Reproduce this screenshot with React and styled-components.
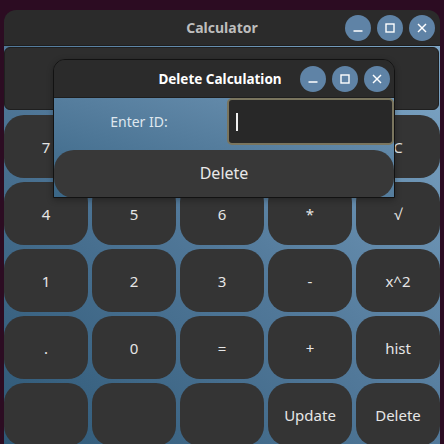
import React from "react";
import styled, { createGlobalStyle } from "styled-components";

const Global = createGlobalStyle`
  html, body { margin: 0; padding: 0; }
  body {
    background: #2c0c22;
    width: 444px;
    height: 444px;
    overflow: hidden;
    font-family: "Noto Sans", "Open Sans", sans-serif;
  }
`;

const Desktop = styled.div`
  position: relative;
  width: 444px;
  height: 444px;
  padding: 10px 4px 0 4px;
  box-sizing: border-box;
`;

const Window = styled.div`
  width: 436px;
  height: 434px;
  display: flex;
  flex-direction: column;
  border-radius: 12px 12px 0 0;
  overflow: hidden;
`;

const TitleBar = styled.div`
  position: relative;
  flex: none;
  height: ${(p) => p.$h}px;
  background: #2b2b2b;
  display: flex;
  align-items: center;
  justify-content: center;
  border-bottom: 1px solid #1e1e1e;
  box-sizing: border-box;
`;

const Title = styled.div`
  font-weight: 700;
  font-size: ${(p) => p.$size}px;
  color: ${(p) => p.$color};
  transform: translateX(${(p) => p.$shift}px);
`;

const Controls = styled.div`
  position: absolute;
  right: ${(p) => p.$right}px;
  top: 50%;
  transform: translateY(-50%);
  display: flex;
  gap: 6px;
`;

const Circle = styled.div`
  width: 26px;
  height: 26px;
  border-radius: 50%;
  background: #5f83a6;
  display: flex;
  align-items: center;
  justify-content: center;
`;

const Content = styled.div`
  flex: 1;
  background: linear-gradient(to top right, #2e5876 0%, #52799a 50%, #7ea6c6 100%);
  display: flex;
  flex-direction: column;
  gap: 5px;
  padding-top: 1px;
`;

const Display = styled.div`
  height: 61px;
  flex: none;
  margin: 0 1px 0 0;
  background: #2e2e2e;
  border: 1px solid #1f1f1f;
  border-radius: 6px;
`;

const Grid = styled.div`
  display: grid;
  grid-template-columns: repeat(5, 84px);
  grid-auto-rows: 63px;
  gap: 4px;
`;

const Key = styled.button`
  border: none;
  background: #343434;
  border-radius: 20px;
  color: #e6e6e6;
  font-family: "Noto Sans", "Open Sans", sans-serif;
  font-size: 15px;
  padding: 0;
  display: flex;
  align-items: center;
  justify-content: center;
`;

const Dialog = styled.div`
  position: absolute;
  left: 53px;
  top: 59px;
  width: 342px;
  height: 139px;
  display: flex;
  flex-direction: column;
  border: 1px solid #121212;
  border-radius: 12px 12px 0 0;
  overflow: hidden;
  box-sizing: border-box;
  box-shadow: 0 2px 6px rgba(0, 0, 0, 0.3);
`;

const DialogBody = styled.div`
  flex: 1;
  background: linear-gradient(to top right, #3a6686 0%, #557d9d 50%, #6f95b5 100%);
  display: flex;
  flex-direction: column;
  gap: 5px;
`;

const FormRow = styled.div`
  display: grid;
  grid-template-columns: 173px 1fr;
  height: 47px;
`;

const Label = styled.div`
  display: flex;
  align-items: center;
  justify-content: center;
  color: #dfe7ee;
  font-size: 14px;
  padding-right: 3px;
`;

const Input = styled.div`
  background: #282828;
  border: 2px solid #7a755e;
  border-radius: 5px;
  box-sizing: border-box;
  display: flex;
  align-items: center;
  padding-left: 7px;
`;

const Caret = styled.div`
  width: 1.5px;
  height: 18px;
  background: #f0f0f0;
`;

const WideButton = styled.button`
  height: 48px;
  border: none;
  border-radius: 20px;
  background: #383838;
  color: #e8e8e8;
  font-family: "Noto Sans", "Open Sans", sans-serif;
  font-size: 16px;
  padding: 0 0 3px 0;
`;

const Icon = ({ kind }) => (
  <svg width="12" height="12" viewBox="0 0 12 12" fill="none" stroke="#ffffff" strokeWidth="1.4">
    {kind === "min" && <line x1="1.5" y1="9" x2="10.5" y2="9" />}
    {kind === "max" && <rect x="2" y="2" width="8" height="8" />}
    {kind === "close" && (
      <>
        <line x1="2" y1="2" x2="10" y2="10" />
        <line x1="10" y1="2" x2="2" y2="10" />
      </>
    )}
  </svg>
);

const WinControls = ({ right }) => (
  <Controls $right={right}>
    <Circle><Icon kind="min" /></Circle>
    <Circle><Icon kind="max" /></Circle>
    <Circle><Icon kind="close" /></Circle>
  </Controls>
);

const keys = [
  "7", "8", "9", "/", "C",
  "4", "5", "6", "*", "√",
  "1", "2", "3", "-", "x^2",
  ".", "0", "=", "+", "hist",
  "", "", "", "Update", "Delete",
];

export default function App() {
  return (
    <>
      <Global />
      <Desktop>
        <Window>
          <TitleBar $h={36}>
            <Title $color="#bdbdbd" $size={14} $shift={0}>Calculator</Title>
            <WinControls right={5} />
          </TitleBar>
          <Content>
            <Display />
            <Grid>
              {keys.map((k, i) => (
                <Key key={i}>{k}</Key>
              ))}
            </Grid>
          </Content>
        </Window>
        <Dialog>
          <TitleBar $h={38}>
            <Title $color="#ffffff" $size={13.5} $shift={-4}>Delete Calculation</Title>
            <WinControls right={4} />
          </TitleBar>
          <DialogBody>
            <FormRow>
              <Label>Enter ID:</Label>
              <Input><Caret /></Input>
            </FormRow>
            <WideButton>Delete</WideButton>
          </DialogBody>
        </Dialog>
      </Desktop>
    </>
  );
}
